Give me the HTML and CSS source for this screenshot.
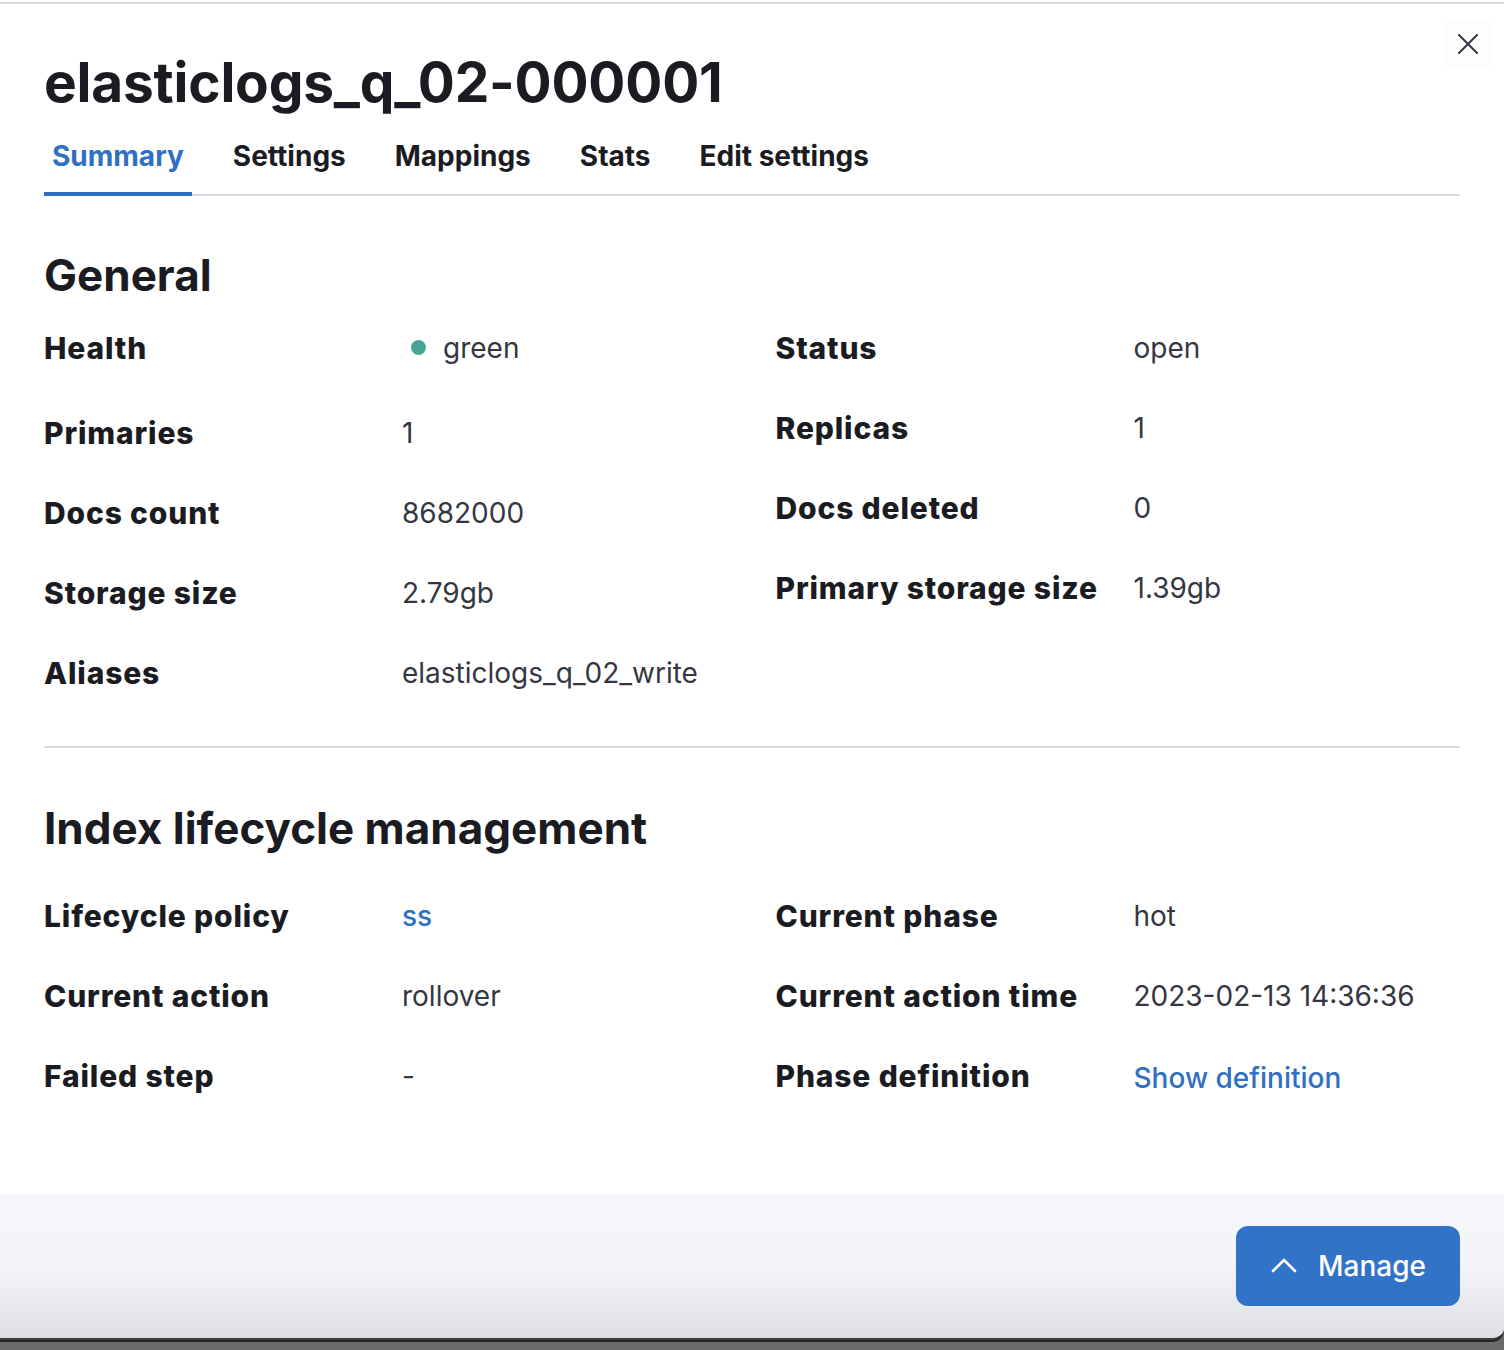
FILE: index.html
```html
<!DOCTYPE html>
<html>
<head>
<meta charset="utf-8">
<link rel="stylesheet" href="styles.css">
</head>
<body>
<div class="topgap"></div>
<div class="flyout">
  <button class="close" aria-label="Close">
    <svg width="22" height="22" viewBox="0 0 22 22"><path d="M2 2 L20 20 M20 2 L2 20" stroke="#343741" stroke-width="2" stroke-linecap="round" fill="none"/></svg>
  </button>
  <header class="header">
    <h1 class="title">elasticlogs_q_02-000001</h1>
    <nav class="tabs">
      <span class="tab active">Summary</span>
      <span class="tab">Settings</span>
      <span class="tab">Mappings</span>
      <span class="tab">Stats</span>
      <span class="tab">Edit settings</span>
    </nav>
  </header>
  <main class="body">
    <h2 class="section-title general">General</h2>
    <div class="cols">
      <dl class="dlist">
        <dt>Health</dt>
        <dd class="health"><span class="dot"></span>green</dd>
        <dt>Primaries</dt><dd>1</dd>
        <dt>Docs count</dt><dd>8682000</dd>
        <dt>Storage size</dt><dd>2.79gb</dd>
        <dt>Aliases</dt><dd>elasticlogs_q_02_write</dd>
      </dl>
      <dl class="dlist">
        <dt>Status</dt><dd>open</dd>
        <dt>Replicas</dt><dd>1</dd>
        <dt>Docs deleted</dt><dd>0</dd>
        <dt>Primary storage size</dt><dd>1.39gb</dd>
      </dl>
    </div>
    <hr class="divider">
    <h2 class="section-title ilm">Index lifecycle management</h2>
    <div class="cols">
      <dl class="dlist">
        <dt>Lifecycle policy</dt><dd><a class="link">ss</a></dd>
        <dt>Current action</dt><dd>rollover</dd>
        <dt>Failed step</dt><dd>-</dd>
      </dl>
      <dl class="dlist">
        <dt>Current phase</dt><dd>hot</dd>
        <dt>Current action time</dt><dd>2023-02-13 14:36:36</dd>
        <dt>Phase definition</dt><dd><a class="link show">Show definition</a></dd>
      </dl>
    </div>
  </main>
  <footer class="footer">
    <button class="manage">
      <svg width="28" height="16" viewBox="0 0 28 16"><path d="M3 14 L14 3 L25 14" stroke="#fff" stroke-width="2.6" fill="none" stroke-linecap="round" stroke-linejoin="round"/></svg>
      <span>Manage</span>
    </button>
  </footer>
</div>
</body>
</html>
```
FILE: styles.css
```css
html, body {
  margin: 0;
  padding: 0;
}
body {
  background: #6b6b6b;
  font-family: Inter, "Noto Sans", sans-serif;
  color: #343741;
  height: 1350px;
  overflow: hidden;
}
.topgap {
  height: 2px;
  background: #ffffff;
}
.flyout {
  position: relative;
  height: 1334px;
  background: #fff;
  border-top: 2px solid #d3dae6;
  display: flex;
  flex-direction: column;
  border-bottom-right-radius: 12px;
  border-bottom: 2px solid #3c3d40;
  box-shadow: 0 2px 0 #262626;
  overflow: hidden;
}
.close {
  position: absolute;
  top: 16px;
  right: 12px;
  width: 48px;
  height: 48px;
  border: none;
  border-radius: 6px;
  background: #fdfdfd;
  display: flex;
  align-items: center;
  justify-content: center;
  padding: 0;
}
.header {
  padding: 46px 44px 0;
}
.title {
  margin: 0;
  font-size: 55px;
  line-height: 64px;
  font-weight: 700;
  color: #1a1c21;
  letter-spacing: -0.2px;
}
.tabs {
  margin-top: 10px;
  display: flex;
  gap: 33px;
  border-bottom: 2px solid #d3dae6;
}
.tab {
  position: relative;
  padding: 12px 8px 18px;
  font-size: 28px;
  line-height: 40px;
  font-weight: 700;
  color: #1a1c21;
}
.tab.active {
  color: #2f6fc4;
}
.tab.active::after {
  content: "";
  position: absolute;
  left: 0;
  right: 0;
  bottom: -2px;
  height: 4px;
  background: #2f6fc4;
}
.body {
  flex: 1;
  padding: 0 44px;
}
.section-title {
  margin: 0;
  font-size: 44px;
  line-height: 56px;
  font-weight: 700;
  color: #1a1c21;
}
.general {
  margin-top: 51px;
  margin-bottom: 25px;
}
.ilm {
  margin-top: 52px;
  margin-bottom: 40px;
}
.cols {
  display: grid;
  grid-template-columns: 1fr 1fr;
  column-gap: 47px;
  align-items: start;
}
.dlist {
  margin: 0;
  display: grid;
  grid-template-columns: 358px 1fr;
  row-gap: 40px;
  font-size: 28px;
  line-height: 40px;
}
.dlist dt {
  font-size: 30px;
  font-weight: 800;
  letter-spacing: 0.85px;
  color: #1a1c21;
}
.dlist dd {
  margin: 0;
  color: #343741;
}
.health {
  height: 45px;
  display: flex;
  align-items: flex-start;
}
.dot {
  width: 15px;
  height: 15px;
  border-radius: 50%;
  background: #48a596;
  margin: 12px 17px 0 9px;
}
.link {
  color: #2f6fc4;
  font-weight: 500;
}
.show {
  display: inline-block;
  margin-top: 2px;
}
.divider {
  margin: 53px 0 0;
  border: none;
  height: 2px;
  background: #d3dae6;
}
.footer {
  height: 144px;
  background: linear-gradient(to bottom, #f5f7fa 0%, #f3f4f7 50%, #dedfe2 100%);
  display: flex;
  justify-content: flex-end;
  align-items: flex-start;
  padding: 32px 44px 0;
  box-sizing: border-box;
}
.manage {
  width: 224px;
  height: 80px;
  border: none;
  border-radius: 12px;
  background: #3173c6;
  color: #fff;
  display: flex;
  align-items: center;
  justify-content: center;
  gap: 20px;
  font-family: Inter, "Noto Sans", sans-serif;
  font-size: 28px;
  font-weight: 500;
  padding: 0;
}
.manage svg {
  margin-top: -2px;
}
```
